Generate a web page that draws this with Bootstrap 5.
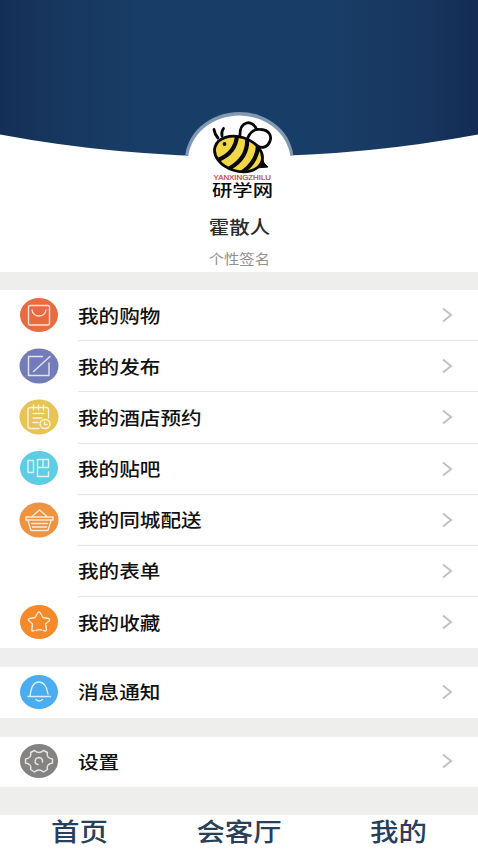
<!DOCTYPE html>
<html lang="zh-CN">
<head>
<meta charset="utf-8">
<meta name="viewport" content="width=device-width, initial-scale=1">
<title>我的</title>
<link href="https://cdn.jsdelivr.net/npm/bootstrap@5.3.0/dist/css/bootstrap.min.css" rel="stylesheet">
<style>
body{font-family:"Noto Sans CJK SC",sans-serif;background:#eeeeed;color:#111;overflow:hidden}
.page{height:850px}
.profile{height:272px}
.profile svg{height:204px}
.wide{display:inline-block;transform:scaleX(1.12);white-space:nowrap;line-height:1.2}
.nick{font-size:18.3px;color:#2b2b2b;height:46px;font-weight:500}
.sign{font-size:13.7px;color:#929292;line-height:16px}
.gap-a{height:18px}.gap-b{height:19px}
.menu-row{height:51.2px;padding-left:19px}
.menu-row.solo{height:50.4px}
.menu-row .ico{width:40px;height:36px;margin-bottom:1.4px}
.menu-body{margin-left:19px;padding-right:25px;border-bottom:1px solid #e4e4e4}
.menu-row:last-child .menu-body{border-bottom-color:transparent}
.menu-body .wide{font-size:18.4px;font-weight:500;transform-origin:0 50%;margin-bottom:1px}
.ico{fill:none;stroke:#fff;stroke-width:1.4;stroke-opacity:.8;stroke-linecap:round;stroke-linejoin:round}
.ico ellipse{stroke:none}
.ico .dial{stroke:#fff}
.chev{width:12px;height:16px;fill:none;stroke:#c3c3c3;stroke-width:2.1}
.tabs{height:35px;font-size:25.4px;font-weight:500;color:#28405b}
.tabs .wide{line-height:30px;height:30px;vertical-align:top}
</style>
<script src="https://cdn.jsdelivr.net/npm/bootstrap@5.3.0/dist/js/bootstrap.bundle.min.js"></script>
</head>
<body>
<main class="page d-flex flex-column">
<header class="profile bg-white d-flex flex-column align-items-center flex-shrink-0">
<svg class="w-100 flex-shrink-0" viewBox="0 0 478 204">
<defs><linearGradient id="sky"><stop offset="0" stop-color="#142f56"/><stop offset=".12" stop-color="#17375f"/><stop offset=".32" stop-color="#183e67"/><stop offset=".7" stop-color="#183d66"/><stop offset=".88" stop-color="#17365f"/><stop offset="1" stop-color="#132c54"/></linearGradient>
<clipPath id="dome"><path d="M0 0H478V134.500Q360 156.500 239 156.500Q118 156.500 0 134.500Z"/></clipPath>
<clipPath id="bee"><ellipse cx="238.500" cy="154" rx="25" ry="17.500" transform="rotate(17 238.500 154)"/></clipPath></defs>
<g clip-path="url(#dome)"><path fill="url(#sky)" d="M0 0H478V160H0Z"/><ellipse cx="239.300" cy="161" rx="54.500" ry="49" fill="#8299b2"/></g>
<ellipse cx="239.300" cy="162" rx="51.500" ry="46.500" fill="#fff"/>
<g fill="#fff" stroke="#080808" stroke-width="2.800" stroke-linecap="round">
<path d="M240 137C239 120 253 119 257 130"/>
<path d="M247 140C250 131 256 128.500 261 129.500C269 130 272 136 270 141C268 147 262 149 258 146"/>
<path fill="none" d="M214 129.500Q214.500 134 218 138M223.500 128.500Q221 132 222 136"/>
<path fill="#080808" stroke-width="1" d="M262 157L264 163L268 167L256 168Z"/>
<ellipse cx="238.500" cy="154" rx="24.500" ry="17" transform="rotate(17 238.500 154)" fill="#f2d747" stroke="none"/>
<g clip-path="url(#bee)" fill="none" stroke-width="4.200"><path d="M237 135Q236 153 218 160M247 137Q249 157 230 168M258 142Q259 161 241 173"/></g>
<ellipse cx="238.500" cy="154" rx="24.500" ry="17" transform="rotate(17 238.500 154)" fill="none"/>
<circle cx="224.500" cy="144" r="1.900" fill="#111" stroke="none"/></g>
<text x="213.500" y="179.500" font-family="Liberation Sans" font-size="7" font-weight="400" stroke="#c83c43" stroke-width=".2" fill="#c83c43" textLength="57.500" lengthAdjust="spacingAndGlyphs">YANXINGZHILU</text>
<text x="212" y="196.200" font-size="15.500" font-weight="500" fill="#080808" textLength="61" lengthAdjust="spacingAndGlyphs">研学网</text>
</svg>
<div class="nick d-flex align-items-center flex-shrink-0"><span class="wide">霍散人</span></div>
<div class="sign"><span class="wide">个性签名</span></div>
</header>
<div class="gap-a flex-shrink-0"></div>
<section class="bg-white flex-shrink-0">
<div class="menu-row d-flex align-items-center"><svg class="ico" viewBox="0 0 40 36"><ellipse cx="20" cy="18" rx="19" ry="17" fill="#e96b40"/><rect x="9.500" y="8.500" width="21" height="19.500" rx="1.500"/><path d="M13 13C14 21 26 21 27 13"/></svg><div class="menu-body d-flex align-items-center justify-content-between flex-grow-1 h-100"><span class="wide">我的购物</span><svg class="chev" viewBox="0 0 12 16"><path d="M2 1.500L10 8L2 14.500"/></svg></div></div>
<div class="menu-row d-flex align-items-center"><svg class="ico" viewBox="0 0 40 36"><ellipse cx="20" cy="18" rx="19.500" ry="17.500" fill="#737cb9"/><path d="M23.500 8.500H9.500V27.500H30V15M14.500 23.500L31 8.500"/></svg><div class="menu-body d-flex align-items-center justify-content-between flex-grow-1 h-100"><span class="wide">我的发布</span><svg class="chev" viewBox="0 0 12 16"><path d="M2 1.500L10 8L2 14.500"/></svg></div></div>
<div class="menu-row d-flex align-items-center"><svg class="ico" viewBox="0 0 40 36"><ellipse cx="20" cy="18" rx="19.500" ry="17.500" fill="#e8c455"/><path d="M20 29.500H11.500Q9 29.500 9 27V10.500Q9 8.500 11.500 8.500H27.500Q29.500 8.500 29.500 10.500V19M14.500 6V11M19.500 6V11M24.500 6V11M14 14.500H25M14 19H23M14 23.500H19"/><ellipse class="dial" cx="26" cy="25" rx="5" ry="4.500"/><path d="M25.500 23V25.500H28"/></svg><div class="menu-body d-flex align-items-center justify-content-between flex-grow-1 h-100"><span class="wide">我的酒店预约</span><svg class="chev" viewBox="0 0 12 16"><path d="M2 1.500L10 8L2 14.500"/></svg></div></div>
<div class="menu-row d-flex align-items-center"><svg class="ico" viewBox="0 0 40 36"><ellipse cx="20" cy="18" rx="19" ry="17" fill="#5ccde4"/><path d="M9 10.500H14.500V22.500H9ZM18.500 17.500V9.500H29.500V17.500H18.500V26.500H29.500V22M24 9.500V17.500"/></svg><div class="menu-body d-flex align-items-center justify-content-between flex-grow-1 h-100"><span class="wide">我的贴吧</span><svg class="chev" viewBox="0 0 12 16"><path d="M2 1.500L10 8L2 14.500"/></svg></div></div>
<div class="menu-row d-flex align-items-center"><svg class="ico" viewBox="0 0 40 36"><ellipse cx="20" cy="18" rx="19.500" ry="17.500" fill="#ed9341"/><path d="M7 15H34V18H7ZM13.500 14L20.500 8L27.500 14M9 18.500L12 28.500H29L32 18.500M12.500 21.500H28.500M13.500 25H27.500"/></svg><div class="menu-body d-flex align-items-center justify-content-between flex-grow-1 h-100"><span class="wide">我的同城配送</span><svg class="chev" viewBox="0 0 12 16"><path d="M2 1.500L10 8L2 14.500"/></svg></div></div>
<div class="menu-row d-flex align-items-center"><span class="ico"></span><div class="menu-body d-flex align-items-center justify-content-between flex-grow-1 h-100"><span class="wide">我的表单</span><svg class="chev" viewBox="0 0 12 16"><path d="M2 1.500L10 8L2 14.500"/></svg></div></div>
<div class="menu-row d-flex align-items-center"><svg class="ico" viewBox="0 0 40 36"><ellipse cx="20" cy="18" rx="19" ry="17" fill="#f58a2c"/><path d="M15 26.500L13.500 27Q12.500 27 12.800 25.500L13.500 20L9.500 16.500Q9 15 10.500 14.500L16 13.500L19 8.500Q20 7.500 21 8.500L24 13.500L29.500 14.500Q31 15 30.500 16.500L26.500 20L27.500 25.500Q27.500 27.500 26 27L24.500 26.500M17 26.500Q20 25 22.500 26"/></svg><div class="menu-body d-flex align-items-center justify-content-between flex-grow-1 h-100"><span class="wide">我的收藏</span><svg class="chev" viewBox="0 0 12 16"><path d="M2 1.500L10 8L2 14.500"/></svg></div></div>
</section>
<div class="gap-b flex-shrink-0"></div>
<section class="bg-white flex-shrink-0">
<div class="menu-row solo d-flex align-items-center"><svg class="ico" viewBox="0 0 40 36"><ellipse cx="20" cy="18" rx="19" ry="17" fill="#4bacef"/><path d="M9 22.500H31.500M11 22C12 16 13 8 20 8C26 8 28 14 29 20M17 25.500Q20 28.500 23.500 25.500"/></svg><div class="menu-body d-flex align-items-center justify-content-between flex-grow-1 h-100"><span class="wide">消息通知</span><svg class="chev" viewBox="0 0 12 16"><path d="M2 1.500L10 8L2 14.500"/></svg></div></div>
</section>
<div class="gap-b flex-shrink-0"></div>
<section class="bg-white flex-shrink-0">
<div class="menu-row solo d-flex align-items-center"><svg class="ico" viewBox="0 0 40 36"><ellipse cx="20" cy="18" rx="19" ry="17" fill="#858382"/><path d="M15.500 7.500Q20 11.500 24.500 7.500L28.500 9.500Q27 15 33.500 16V20Q27 21 28.500 26.500L24.500 29Q20 25 15.500 29L11.500 26.500Q13 21 6.500 20V16Q13 15 11.500 9.500ZM19 21.500C15 21 15 15 20 14.500Q24 15 23.500 19"/></svg><div class="menu-body d-flex align-items-center justify-content-between flex-grow-1 h-100"><span class="wide">设置</span><svg class="chev" viewBox="0 0 12 16"><path d="M2 1.500L10 8L2 14.500"/></svg></div></div>
</section>
<nav class="tabs row g-0 bg-white text-center mt-auto flex-shrink-0">
<div class="col"><span class="wide">首页</span></div><div class="col"><span class="wide">会客厅</span></div><div class="col"><span class="wide">我的</span></div>
</nav>
</main>
</body>
</html>
